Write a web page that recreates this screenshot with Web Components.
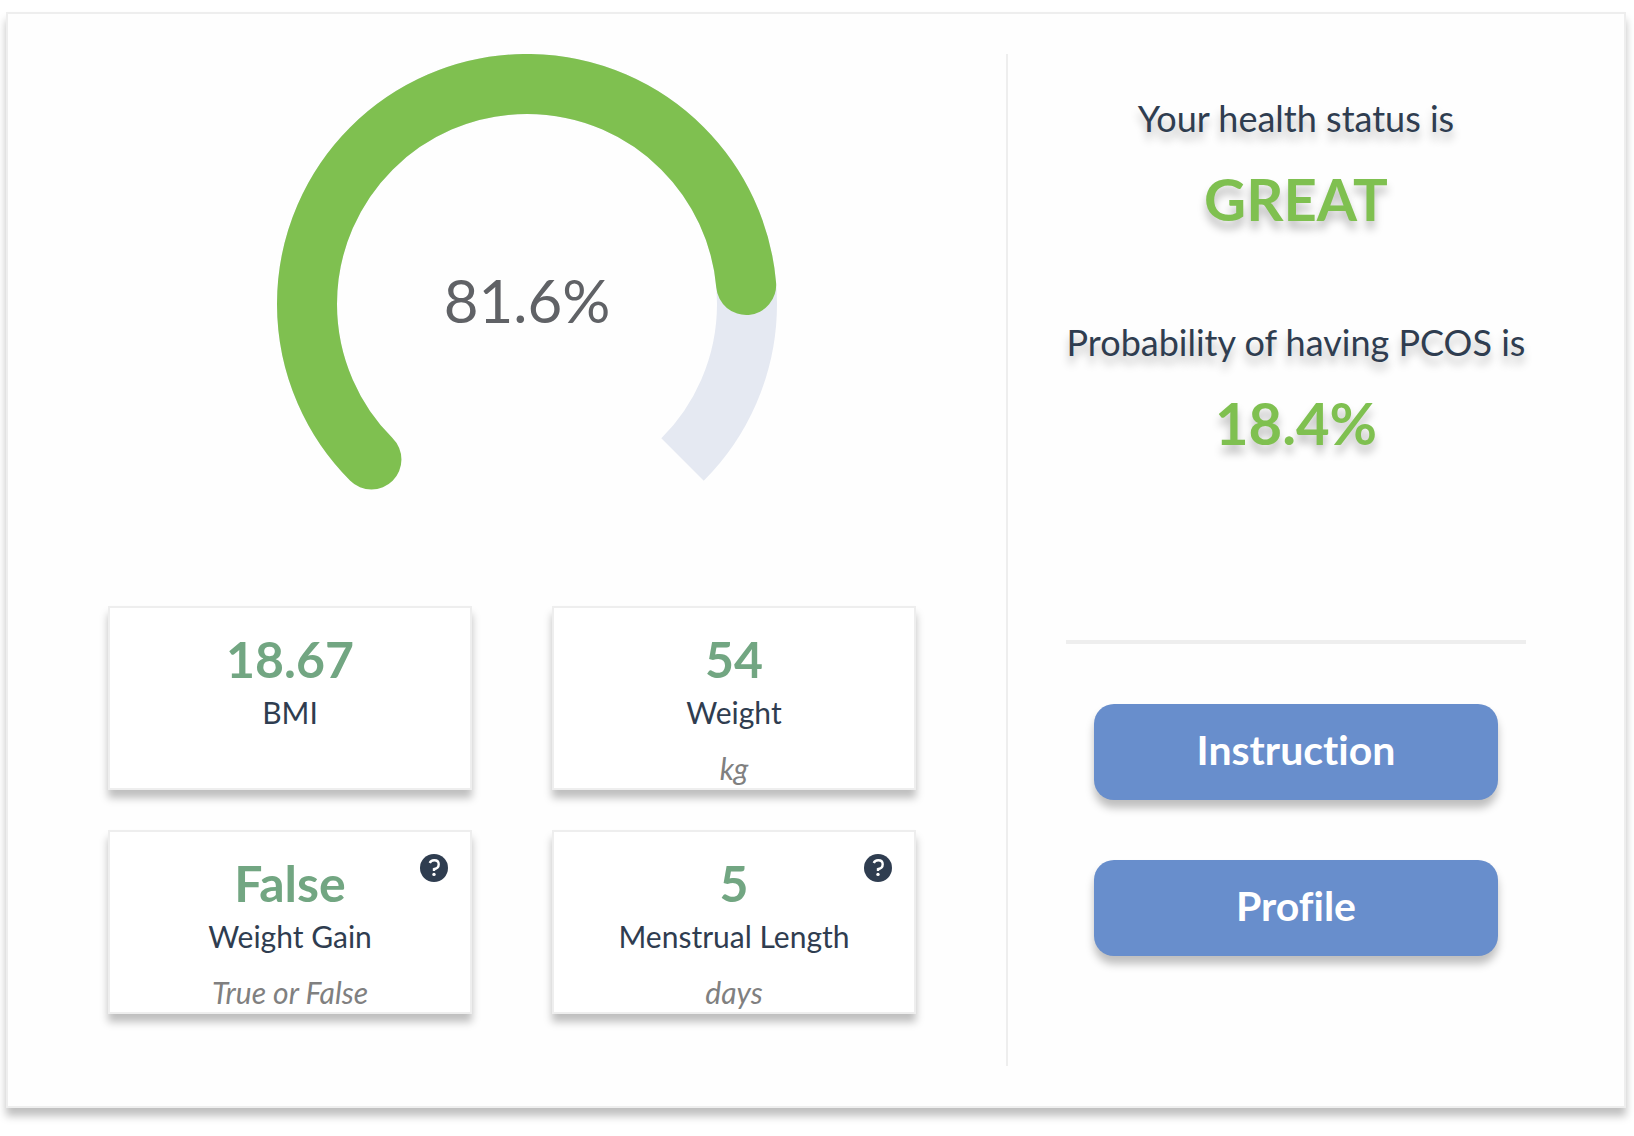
<!DOCTYPE html>
<html lang="en">
<head>
<meta charset="utf-8">
<title>Health status</title>
<style>
  body {
    margin: 0;
    padding: 12px 8px 28px 6px;
    background: #fff;
    color: #2f3d50;
    font-family: Lato, "Open Sans", sans-serif;
    font-variant-ligatures: no-common-ligatures;
    --line: #eee;
    --good: #7fc050;
    --drop: 0 8px 8px rgba(0, 0, 0, .25);
  }
</style>
</head>
<body>
<health-card>
  <score-gauge slot="score" value="81.6"></score-gauge>
  <stat-card slot="stats" value="18.67" label="BMI"></stat-card>
  <stat-card slot="stats" value="54" label="Weight" unit="kg"></stat-card>
  <stat-card slot="stats" value="False" label="Weight Gain" unit="True or False" help></stat-card>
  <stat-card slot="stats" value="5" label="Menstrual Length" unit="days" help></stat-card>
  <status-line slot="status" value="GREAT">Your health status is</status-line>
  <status-line slot="status" value="18.4%">Probability of having PCOS is</status-line>
  <action-button slot="actions">Instruction</action-button>
  <action-button slot="actions">Profile</action-button>
</health-card>

<script>
class HealthCard extends HTMLElement {
  connectedCallback() {
    this.attachShadow({ mode: 'open' }).innerHTML = `
      <style>
        :host {
          display: grid;
          grid-template-columns: minmax(0, 5fr) minmax(0, 3fr);
          padding: 40px;
          border: 2px solid var(--line);
          background: #fefefe;
          box-shadow: var(--drop);
        }
        .overview {
          display: flex;
          flex-direction: column;
          gap: 52px;
          padding-bottom: 52px;
          border-right: 2px solid var(--line);
        }
        .score { display: flex; justify-content: center; }
        .stats {
          display: grid;
          grid-template-columns: repeat(2, 1fr);
          gap: 40px 80px;
          padding: 0 90px 0 60px;
        }
        .summary { display: flex; flex-direction: column; padding: 28px 58px 0; }
        .status {
          display: flex;
          flex-direction: column;
          align-items: center;
          gap: 62px;
          height: 558px;
        }
        hr { width: 100%; height: 4px; margin: 0; border: 0; background: var(--line); }
        .actions { display: flex; flex-direction: column; gap: 60px; padding: 60px 28px 0; }
      </style>
      <section class="overview">
        <div class="score"><slot name="score"></slot></div>
        <div class="stats"><slot name="stats"></slot></div>
      </section>
      <section class="summary">
        <div class="status"><slot name="status"></slot></div>
        <hr>
        <div class="actions"><slot name="actions"></slot></div>
      </section>`;
  }
}

class ScoreGauge extends HTMLElement {
  connectedCallback() {
    const value = Number(this.getAttribute('value'));
    const arc = 'M18.89 81.11A44 44 0 1 1 81.11 81.11';
    this.attachShadow({ mode: 'open' }).innerHTML = `
      <style>
        :host { display: grid; width: 500px; height: 500px; }
        svg, .text { grid-area: 1 / 1; }
        svg { display: block; width: 100%; height: 100%; }
        path { fill: none; stroke-width: 12; }
        .track { stroke: #e5e9f2; }
        .bar { stroke: var(--good); stroke-linecap: round; }
        .text {
          align-self: center;
          justify-self: center;
          padding-bottom: 8px;
          color: #606266;
          font-size: 60px;
          line-height: 70px;
        }
      </style>
      <svg viewBox="0 0 100 100" aria-hidden="true">
        <path class="track" d="${arc}"/>
        <path class="bar" d="${arc}" pathLength="100" stroke-dasharray="${value} 200"/>
      </svg>
      <div class="text">${value}%</div>`;
  }
}

class StatCard extends HTMLElement {
  connectedCallback() {
    const unit = this.getAttribute('unit');
    this.attachShadow({ mode: 'open' }).innerHTML = `
      <style>
        :host {
          display: block;
          position: relative;
          box-sizing: border-box;
          min-height: 184px;
          padding-top: 22px;
          border: 2px solid var(--line);
          background: #fff;
          box-shadow: var(--drop);
          text-align: center;
        }
        .value { color: #72a682; font-size: 50px; font-weight: 700; line-height: 58px; }
        .label { font-size: 30px; line-height: 48px; }
        .unit {
          margin-top: 12px;
          color: #808080;
          font-size: 30px;
          font-style: italic;
          line-height: 40px;
        }
        button {
          position: absolute;
          top: 22px;
          right: 22px;
          padding: 0;
          border: 0;
          background: none;
          cursor: pointer;
        }
        svg { display: block; width: 28px; height: 28px; }
      </style>
      <div class="value">${this.getAttribute('value')}</div>
      <div class="label">${this.getAttribute('label')}</div>
      ${unit ? `<div class="unit">${unit}</div>` : ''}
      ${this.hasAttribute('help') ? `
      <button type="button" aria-label="Help">
        <svg viewBox="0 0 28 28" aria-hidden="true">
          <circle cx="14" cy="14" r="14" fill="#2f3d50"/>
          <path d="M9.8 9C10.4 7.2 12 6.3 14.2 6.3C17 6.3 18.7 8 18.7 10.3C18.7 13.2 16.4 15 13.4 15.2" fill="none" stroke="#fff" stroke-width="2.4"/>
          <path d="M14 14.2V17" fill="none" stroke="#fff" stroke-width="2.4"/>
          <circle cx="14" cy="20.4" r="1.7" fill="#fff"/>
        </svg>
      </button>` : ''}`;
  }
}

class StatusLine extends HTMLElement {
  connectedCallback() {
    this.attachShadow({ mode: 'open' }).innerHTML = `
      <style>
        :host { display: block; text-align: center; text-shadow: var(--drop); white-space: nowrap; }
        .message { font-size: 36px; line-height: 72px; }
        .value { color: var(--good); font-size: 58px; font-weight: 700; line-height: 90px; }
      </style>
      <div class="message"><slot></slot></div>
      <div class="value">${this.getAttribute('value')}</div>`;
  }
}

class ActionButton extends HTMLElement {
  connectedCallback() {
    this.attachShadow({ mode: 'open' }).innerHTML = `
      <style>
        :host { display: block; }
        button {
          display: block;
          width: 100%;
          padding: 22px 20px 26px;
          border: 0;
          border-radius: 20px;
          background: #688ecc;
          box-shadow: var(--drop);
          color: #fff;
          font: inherit;
          font-variant-ligatures: inherit;
          font-size: 41px;
          font-weight: 700;
          line-height: 48px;
          cursor: pointer;
        }
      </style>
      <button type="button"><slot></slot></button>`;
  }
}

customElements.define('health-card', HealthCard);
customElements.define('score-gauge', ScoreGauge);
customElements.define('stat-card', StatCard);
customElements.define('status-line', StatusLine);
customElements.define('action-button', ActionButton);
</script>
</body>
</html>
